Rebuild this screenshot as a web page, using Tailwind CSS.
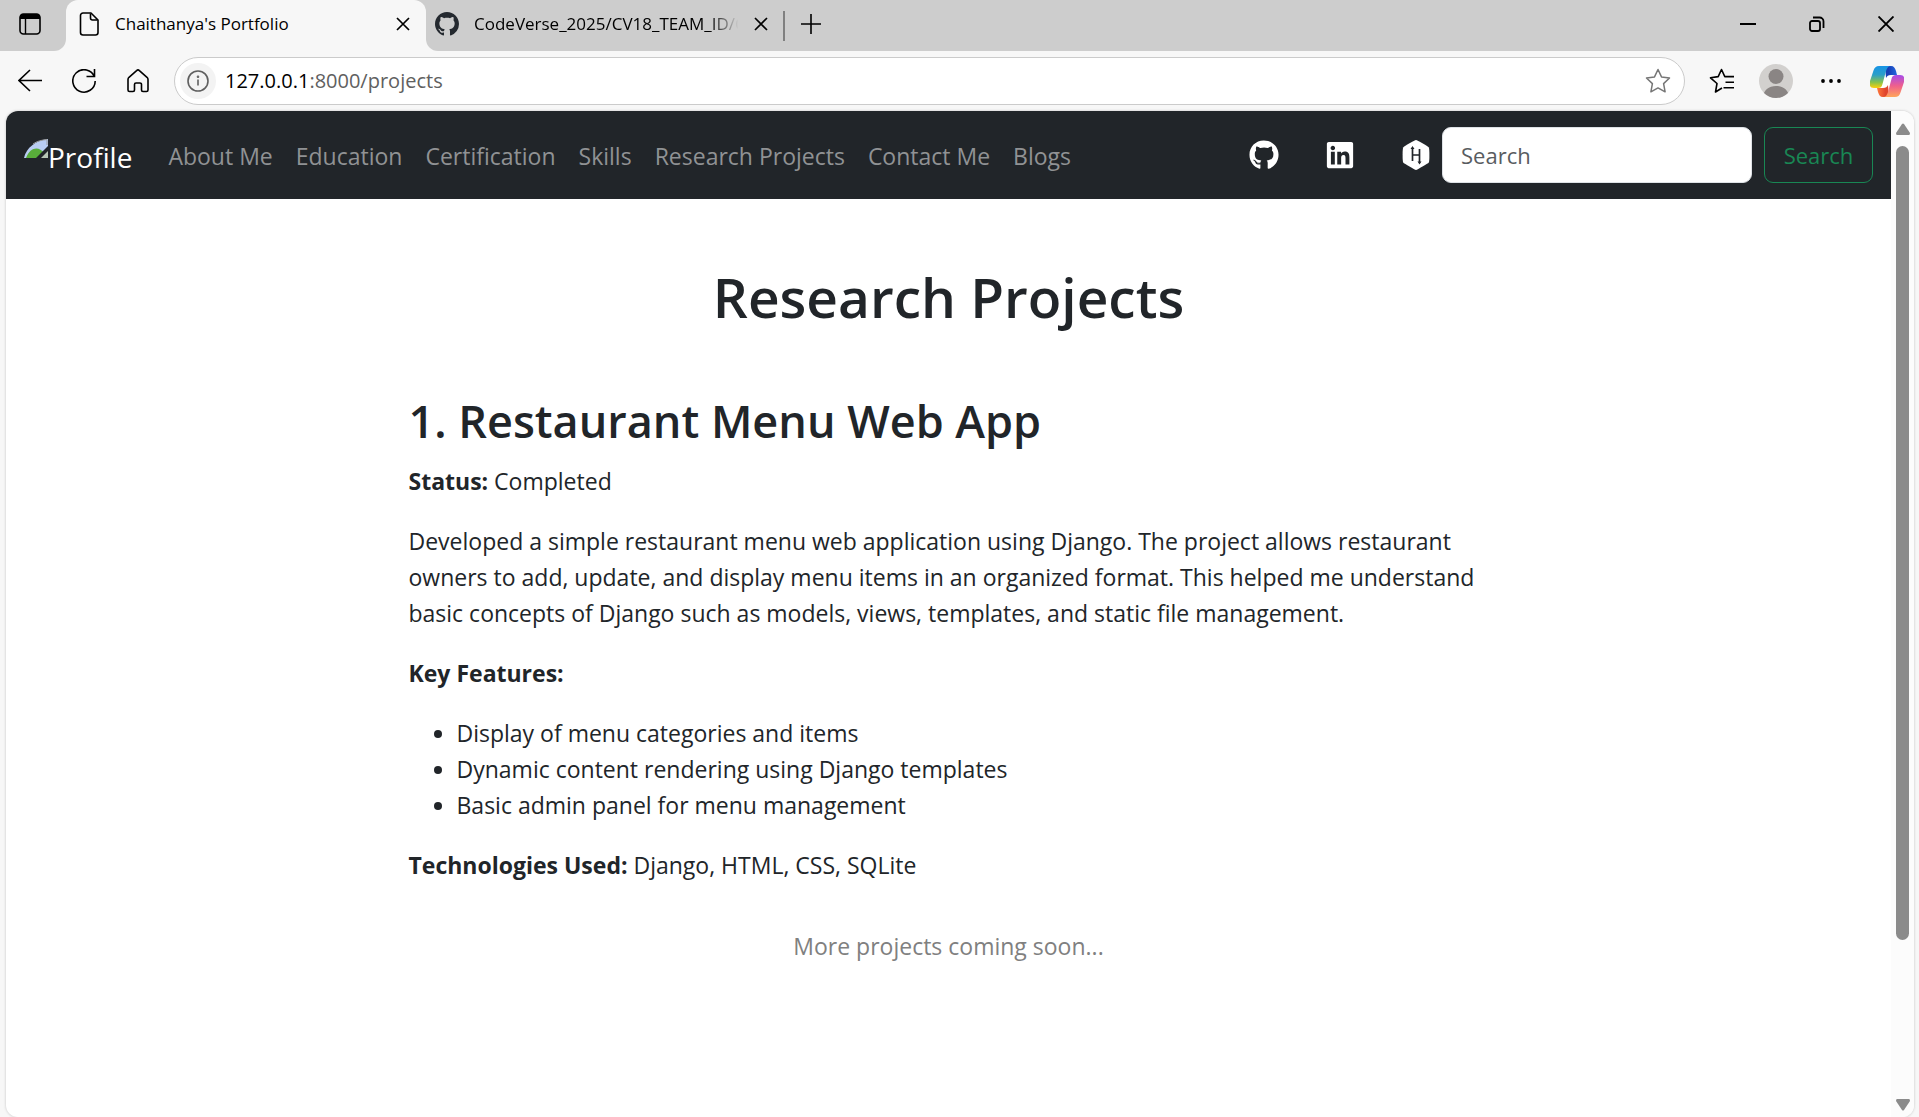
<!DOCTYPE html>
<html lang="en">
<head>
<meta charset="utf-8">
<title>Chaithanya's Portfolio</title>
<script src="https://cdn.jsdelivr.net/npm/@tailwindcss/browser@4"></script>
</head>
<body class="flex min-h-screen flex-col overflow-x-hidden bg-[#f7f7f7] font-['Open_Sans',sans-serif] text-black">

<!-- Tab strip -->
<div class="flex h-[51px] shrink-0">
  <div class="flex w-[66px] items-center rounded-br-xl bg-[#cdcdcd] pb-[3px] pl-[19px]">
    <button aria-label="Tab actions menu">
      <svg class="block size-[22px]" viewBox="0 0 22 22"><rect x="1" y="1" width="20" height="20" rx="3.5" fill="none" stroke="#000" stroke-width="1.6"/><path d="M1 6V4a3 3 0 0 1 3-3h14a3 3 0 0 1 3 3v2z"/><path d="M6.5 6v15" stroke="#000" stroke-width="1.4"/></svg>
    </button>
  </div>
  <div class="w-[360px] bg-[#cdcdcd]">
    <div class="flex h-full items-center rounded-t-xl bg-[#f7f7f7] pr-[15px] pb-[3px] pl-[13px]">
      <svg class="block h-6 w-5" viewBox="0 0 20 24" fill="none" stroke="#000" stroke-width="1.6" stroke-linejoin="round"><path d="M4 1h8l7 7v12.500a2.500 2.500 0 0 1-2.500 2.500h-12.500a2.500 2.500 0 0 1-2.500-2.500v-17a2.500 2.500 0 0 1 2.500-2.500z"/><path d="M11.500 1.500v4.500a2 2 0 0 0 2 2h5"/></svg>
      <span class="ml-4 text-[17px]">Chaithanya's Portfolio</span>
      <button class="ml-auto" aria-label="Close tab"><svg class="block size-4" viewBox="0 0 16 16" stroke="#000" stroke-width="1.700"><path d="M2 2l12 12M14 2L2 14"/></svg></button>
    </div>
  </div>
  <div class="flex flex-1 items-center rounded-bl-xl bg-[#cdcdcd] pb-[3px] pl-[9px]">
    <svg class="block size-6" viewBox="0 0 16 16" fill="#24292f"><path d="M8 0C3.580 0 0 3.580 0 8c0 3.540 2.290 6.530 5.470 7.590.4.070.55-.17.55-.38 0-.19-.01-.82-.01-1.490-2.010.37-2.530-.49-2.690-.94-.09-.23-.48-.94-.82-1.130-.28-.15-.68-.52-.01-.53.63-.01 1.080.58 1.230.82.72 1.210 1.870.87 2.330.66.07-.52.28-.87.51-1.070-1.780-.2-3.640-.89-3.640-3.950 0-.87.31-1.590.82-2.150-.08-.2-.36-1.020.08-2.120 0 0 .67-.21 2.200.82.64-.18 1.320-.27 2-.27s1.360.09 2 .27c1.530-1.040 2.200-.82 2.200-.82.44 1.100.16 1.920.08 2.120.51.56.82 1.270.82 2.150 0 3.070-1.870 3.750-3.650 3.950.29.25.54.73.54 1.480 0 1.070-.01 1.930-.01 2.200 0 .21.15.46.55.38A8.010 8.010 0 0 0 16 8c0-4.420-3.580-8-8-8z"/></svg>
    <span class="ml-[15px] w-[267px] bg-linear-to-r from-black from-88% to-transparent to-99% bg-clip-text text-[17px] whitespace-nowrap text-transparent">CodeVerse_2025/CV18_TEAM_ID/C</span>
    <button class="ml-3" aria-label="Close tab"><svg class="block size-4" viewBox="0 0 16 16" stroke="#000" stroke-width="1.700"><path d="M2 2l12 12M14 2L2 14"/></svg></button>
    <div class="mt-[3px] ml-[14px] h-[30px] w-[2px] bg-[#808080]"></div>
    <button class="ml-[15px]" aria-label="New tab"><svg class="block size-[22px]" viewBox="0 0 22 22" stroke="#000" stroke-width="1.600"><path d="M11 1v20M1 11h20"/></svg></button>
    <div class="ml-auto flex items-center gap-[53px] pr-[25px]">
      <button aria-label="Minimize"><svg class="block size-4" viewBox="0 0 16 16" stroke="#000" stroke-width="2"><path d="M0 8h16"/></svg></button>
      <button aria-label="Restore"><svg class="block size-4" viewBox="0 0 16 16" fill="none" stroke="#000" stroke-width="1.800"><rect x="1" y="5" width="10" height="10" rx="2"/><path d="M4 1.500h6.500a4 4 0 0 1 4 4v6.500"/></svg></button>
      <button aria-label="Close"><svg class="block size-4" viewBox="0 0 16 16" stroke="#000" stroke-width="1.900"><path d="M.5.5l15 15M15.500.5l-15 15"/></svg></button>
    </div>
  </div>
</div>

<!-- Toolbar -->
<div class="flex h-[60px] shrink-0 items-center pr-[15px] pl-[18px]">
  <button aria-label="Back"><svg class="block size-6" viewBox="0 0 24 24" fill="none" stroke="#000" stroke-width="1.600"><path d="M24 11.500H1M12 1L1 11.500l11 10.500"/></svg></button>
  <button class="ml-[30px]" aria-label="Refresh"><svg class="block size-6" viewBox="0 0 24 24" fill="none" stroke="#000" stroke-width="1.600"><path d="M22.500 8A11.200 11.200 0 1 0 23.200 12M22.500 0v7.500h-8"/></svg></button>
  <button class="ml-[30px]" aria-label="Home"><svg class="block size-6" viewBox="0 0 24 24" fill="none" stroke="#000" stroke-width="1.600" stroke-linejoin="round"><path d="M2 10.500c0-.9.400-1.600 1-2.200L10.600 1.600a2 2 0 0 1 2.800 0L21 8.300c.6.600 1 1.300 1 2.200V21a1.500 1.500 0 0 1-1.500 1.500H17A1.500 1.500 0 0 1 15.500 21v-5.500a1.500 1.500 0 0 0-1.500-1.500h-4a1.500 1.500 0 0 0-1.500 1.500V21A1.500 1.500 0 0 1 7 22.500H3.500A1.500 1.500 0 0 1 2 21z"/></svg></button>
  <div class="ml-6 flex h-12 flex-1 items-center rounded-full border border-[#cbcbcb] bg-white pr-[13px] pl-[5px]">
    <button class="flex size-9 items-center justify-center rounded-full bg-[#f3f3f3]" aria-label="Site information"><svg class="block size-[22px]" viewBox="0 0 22 22" fill="none" stroke="#5f5f5f" stroke-width="1.600"><circle cx="11" cy="11" r="10"/><path d="M11 9.500v6"/><circle cx="11" cy="6.800" r=".5"/></svg></button>
    <a href="#" class="ml-[9px] flex-1 text-[20px] text-[#606060]"><span class="text-black">127.0.0.1</span>:8000/projects</a>
    <button aria-label="Add to favorites"><svg class="block size-[26px]" viewBox="0 0 26 26" fill="none" stroke="#767676" stroke-width="1.500" stroke-linejoin="round"><path d="M13 1.500l3.500 7.400 8 1.100-5.900 5.600 1.500 8.200-7.100-3.900-7.100 3.900 1.500-8.200L1.500 10l8-1.100z"/></svg></button>
  </div>
  <button class="ml-6" aria-label="Favorites"><svg class="block size-[26px]" viewBox="0 0 26 26" fill="none" stroke="#000" stroke-width="1.600" stroke-linejoin="round"><path d="M13 20l-6.500 4 1.500-8.500L1.500 9.800l7.700-1.200L12.500 1.500l3.300 7.100h9.200M16.500 14.300h8.500M14.500 19.800h10.500"/></svg></button>
  <button class="ml-6" aria-label="Profile"><svg class="block size-[34px]" viewBox="0 0 34 34"><defs><clipPath id="avatar"><circle cx="17" cy="17" r="17"/></clipPath></defs><circle cx="17" cy="17" r="17" fill="#d2d0ce"/><g clip-path="url(#avatar)" fill="#8a8584"><circle cx="17" cy="12.500" r="7.500"/><path d="M4 34c0-8 6-12 13-12s13 4 13 12z"/></g></svg></button>
  <button class="ml-7" aria-label="Settings and more"><svg class="block h-1 w-5" viewBox="0 0 20 4"><circle cx="2" cy="2" r="1.900"/><circle cx="10" cy="2" r="1.900"/><circle cx="18" cy="2" r="1.900"/></svg></button>
  <button class="ml-[29px]" aria-label="Copilot"><svg class="block h-[31px] w-[34px]" viewBox="0 0 34 31">
    <defs>
      <linearGradient id="cpa" x1="0" y1="0" x2="0" y2="1"><stop offset="0" stop-color="#1794e6"/><stop offset=".4" stop-color="#2a9fc8"/><stop offset=".75" stop-color="#8bc34a"/><stop offset="1" stop-color="#ffcf0a"/></linearGradient>
      <linearGradient id="cpb" x1="0" y1="1" x2="0" y2="0"><stop offset="0" stop-color="#a64bea"/><stop offset=".5" stop-color="#f0608c"/><stop offset="1" stop-color="#ffa65a"/></linearGradient>
      <linearGradient id="cpc"><stop offset=".3" stop-color="#173fb5"/><stop offset="1" stop-color="#2468e0"/></linearGradient>
      <linearGradient id="cpd"><stop offset=".3" stop-color="#e0452c"/><stop offset="1" stop-color="#ff7a3c"/></linearGradient>
    </defs>
    <path d="M14 9h8l-3 13h-8z" fill="#fff"/>
    <path d="M15 0h6c3 0 4 2 5 5l1 4h-6c-3 0-4 1-5 3z" fill="url(#cpc)"/>
    <path d="M9 0h12c-3 0-4 2-5 5l-3.500 13c-.8 3-2 4-4.500 4H4c-4 0-5-3-4-7L3.500 4.500C4.500 1.500 6 0 9 0z" fill="url(#cpa)"/>
    <g transform="rotate(180 17 15.500)">
      <path d="M15 0h6c3 0 4 2 5 5l1 4h-6c-3 0-4 1-5 3z" fill="url(#cpd)"/>
      <path d="M9 0h12c-3 0-4 2-5 5l-3.500 13c-.8 3-2 4-4.500 4H4c-4 0-5-3-4-7L3.500 4.500C4.500 1.500 6 0 9 0z" fill="url(#cpb)"/>
    </g>
  </svg></button>
</div>

<!-- Page viewport -->
<div class="mr-[5px] ml-[6px] flex flex-1 overflow-hidden rounded-xl bg-white shadow-[0_0_2px_1px_#dedede]">
  <div class="flex-1">
    <nav class="flex h-[88px] items-center bg-[#212529] px-[18px] text-[#909294]">
      <a href="#" class="flex items-center text-[28px] text-white">
        <svg class="mb-3 block h-5 w-6" viewBox="0 0 24 20"><path d="M0 19C2 9 12 1 24 0v19z" fill="#b9cdf2"/><path d="M2 19C6 8 15 7 20 14l-5 5z" fill="#58ad3a"/><path d="M11 20L24 7v13z" fill="#212529"/><path d="M17 19l7-7v7z" fill="#b7c6b5"/><path d="M9 5C13 2 18 1 23 .500V6" fill="none" stroke="#9a9a9a"/></svg>
        <span class="pt-1">Profile</span>
      </a>
      <div class="ml-9 flex gap-[23px] pt-[2px] text-[23px] whitespace-nowrap">
        <a href="#">About Me</a>
        <a href="#">Education</a>
        <a href="#">Certification</a>
        <a href="#">Skills</a>
        <a href="#">Research Projects</a>
        <a href="#">Contact Me</a>
        <a href="#">Blogs</a>
      </div>
      <div class="ml-auto flex items-center">
        <div class="mr-[11px] flex items-center gap-[46px] text-white">
          <a href="#" aria-label="GitHub"><svg class="block size-[30px]" viewBox="0 0 496 512" fill="currentColor"><path d="M165.900 397.400c0 2-2.300 3.600-5.200 3.600-3.300.3-5.600-1.300-5.600-3.600 0-2 2.300-3.600 5.200-3.600 3-.3 5.600 1.300 5.600 3.600zm-31.100-4.500c-.7 2 1.300 4.300 4.300 4.900 2.600 1 5.600 0 6.200-2s-1.300-4.300-4.300-5.200c-2.600-.7-5.500.3-6.200 2.300zm44.200-1.700c-2.900.7-4.900 2.600-4.600 4.900.3 2 2.900 3.300 5.900 2.600 2.900-.7 4.900-2.600 4.600-4.600-.3-1.900-3-3.200-5.900-2.900zM244.800 8C106.100 8 0 113.300 0 252c0 110.900 69.800 205.800 169.500 239.200 12.800 2.300 17.300-5.600 17.300-12.100 0-6.200-.3-40.400-.3-61.400 0 0-70 15-84.700-29.800 0 0-11.400-29.100-27.800-36.600 0 0-22.900-15.700 1.600-15.400 0 0 24.900 2 38.600 25.800 21.900 38.600 58.600 27.500 72.900 20.900 2.300-16 8.800-27.100 16-33.700-55.900-6.200-112.300-14.300-112.300-110.500 0-27.500 7.600-41.300 23.600-58.900-2.600-6.500-11.100-33.300 2.600-67.900 20.900-6.500 69 27 69 27 20-5.600 41.500-8.500 62.800-8.500s42.800 2.900 62.800 8.500c0 0 48.100-33.600 69-27 13.700 34.700 5.200 61.400 2.600 67.900 16 17.700 25.800 31.500 25.800 58.900 0 96.500-58.900 104.200-114.800 110.500 9.200 7.900 17 22.900 17 46.400 0 33.700-.3 75.400-.3 83.600 0 6.500 4.600 14.400 17.300 12.100C428.200 457.800 496 362.900 496 252 496 113.300 383.500 8 244.800 8z"/></svg></a>
          <a href="#" aria-label="LinkedIn"><svg class="block size-[30px]" viewBox="-32 0 512 512" fill="currentColor"><path d="M416 32H31.900C14.300 32 0 46.500 0 64.300v383.400C0 465.500 14.300 480 31.900 480H416c17.600 0 32-14.500 32-32.300V64.300c0-17.800-14.400-32.300-32-32.300zM135.400 416H69V202.200h66.500V416zm-33.200-243c-21.300 0-38.500-17.300-38.500-38.500S80.900 96 102.200 96c21.200 0 38.500 17.300 38.500 38.500 0 21.300-17.200 38.500-38.500 38.500zm282.100 243h-66.400V312c0-24.800-.5-56.700-34.500-56.700-34.600 0-39.900 27-39.900 54.900V416h-66.400V202.200h63.700v29.200h.9c8.900-16.800 30.600-34.500 62.900-34.500 67.200 0 79.700 44.300 79.700 101.900V416z"/></svg></a>
          <a href="#" aria-label="HackerRank"><svg class="block size-[30px]" viewBox="0 0 30 30"><path d="M15 0c1 0 12 6.300 12.800 7.400.8 1.200.8 14 0 15.200C27 23.700 16 30 15 30S3 23.700 2.200 22.600c-.8-1.200-.8-14 0-15.200C3 6.300 14 0 15 0z" fill="currentColor"/><path d="M11.500 8v13M18.500 9v13M11.500 15h7" stroke="#212529" stroke-width="1.700"/><path d="M9.500 9l2-3 2 3zM16.500 21.500l2 3 2-3z" fill="#212529"/></svg></a>
        </div>
        <form class="flex gap-3 text-[22px]">
          <input type="search" placeholder="Search" aria-label="Search" class="h-14 w-[310px] rounded-[9px] border border-[#dee2e6] bg-white px-[18px] text-[#212529] placeholder:text-[#595c5f]">
          <button type="button" class="h-14 w-[109px] rounded-[9px] border border-[#198754] text-[#198754]">Search</button>
        </form>
      </div>
    </nav>

    <main class="mx-auto w-full max-w-[1080px] pt-[62px] text-[23px] leading-9 text-[#212529]">
      <h1 class="text-center text-[55px] leading-[72px] font-semibold">Research Projects</h1>
      <h2 class="mt-[58px] text-[45px] leading-[60px] font-semibold">1. Restaurant Menu Web App</h2>
      <p class="mt-3"><strong>Status:</strong> Completed</p>
      <p class="mt-6">Developed a simple restaurant menu web application using Django. The project allows restaurant owners to add, update, and display menu items in an organized format. This helped me understand basic concepts of Django such as models, views, templates, and static file management.</p>
      <p class="mt-6"><strong>Key Features:</strong></p>
      <ul class="mt-6 list-disc pl-12">
        <li>Display of menu categories and items</li>
        <li>Dynamic content rendering using Django templates</li>
        <li>Basic admin panel for menu management</li>
      </ul>
      <p class="mt-6"><strong>Technologies Used:</strong> Django, HTML, CSS, SQLite</p>
      <p class="mt-[45px] text-center text-[#808080]">More projects coming soon...</p>
    </main>
  </div>

  <!-- Scrollbar -->
  <div class="flex w-[23px] flex-col items-center bg-[#fcfcfc] pt-3 pb-[6px]">
    <svg class="block h-3 w-[14px]" viewBox="0 0 14 12" fill="#8b8b8b"><path d="M6 1q1-1 2 0l6 9q0 2-1 2H1q-1 0-1-2z"/></svg>
    <div class="mt-[11px] flex w-[13px] flex-1 flex-col">
      <div class="rounded-full bg-[#8b8b8b]" style="height:83.300%"></div>
    </div>
    <svg class="block h-3 w-[14px]" viewBox="0 0 14 12" fill="#8b8b8b"><path d="M6 11q1 1 2 0l6-9q0-2-1-2H1Q0 0 0 2z"/></svg>
  </div>
</div>
</body>
</html>
